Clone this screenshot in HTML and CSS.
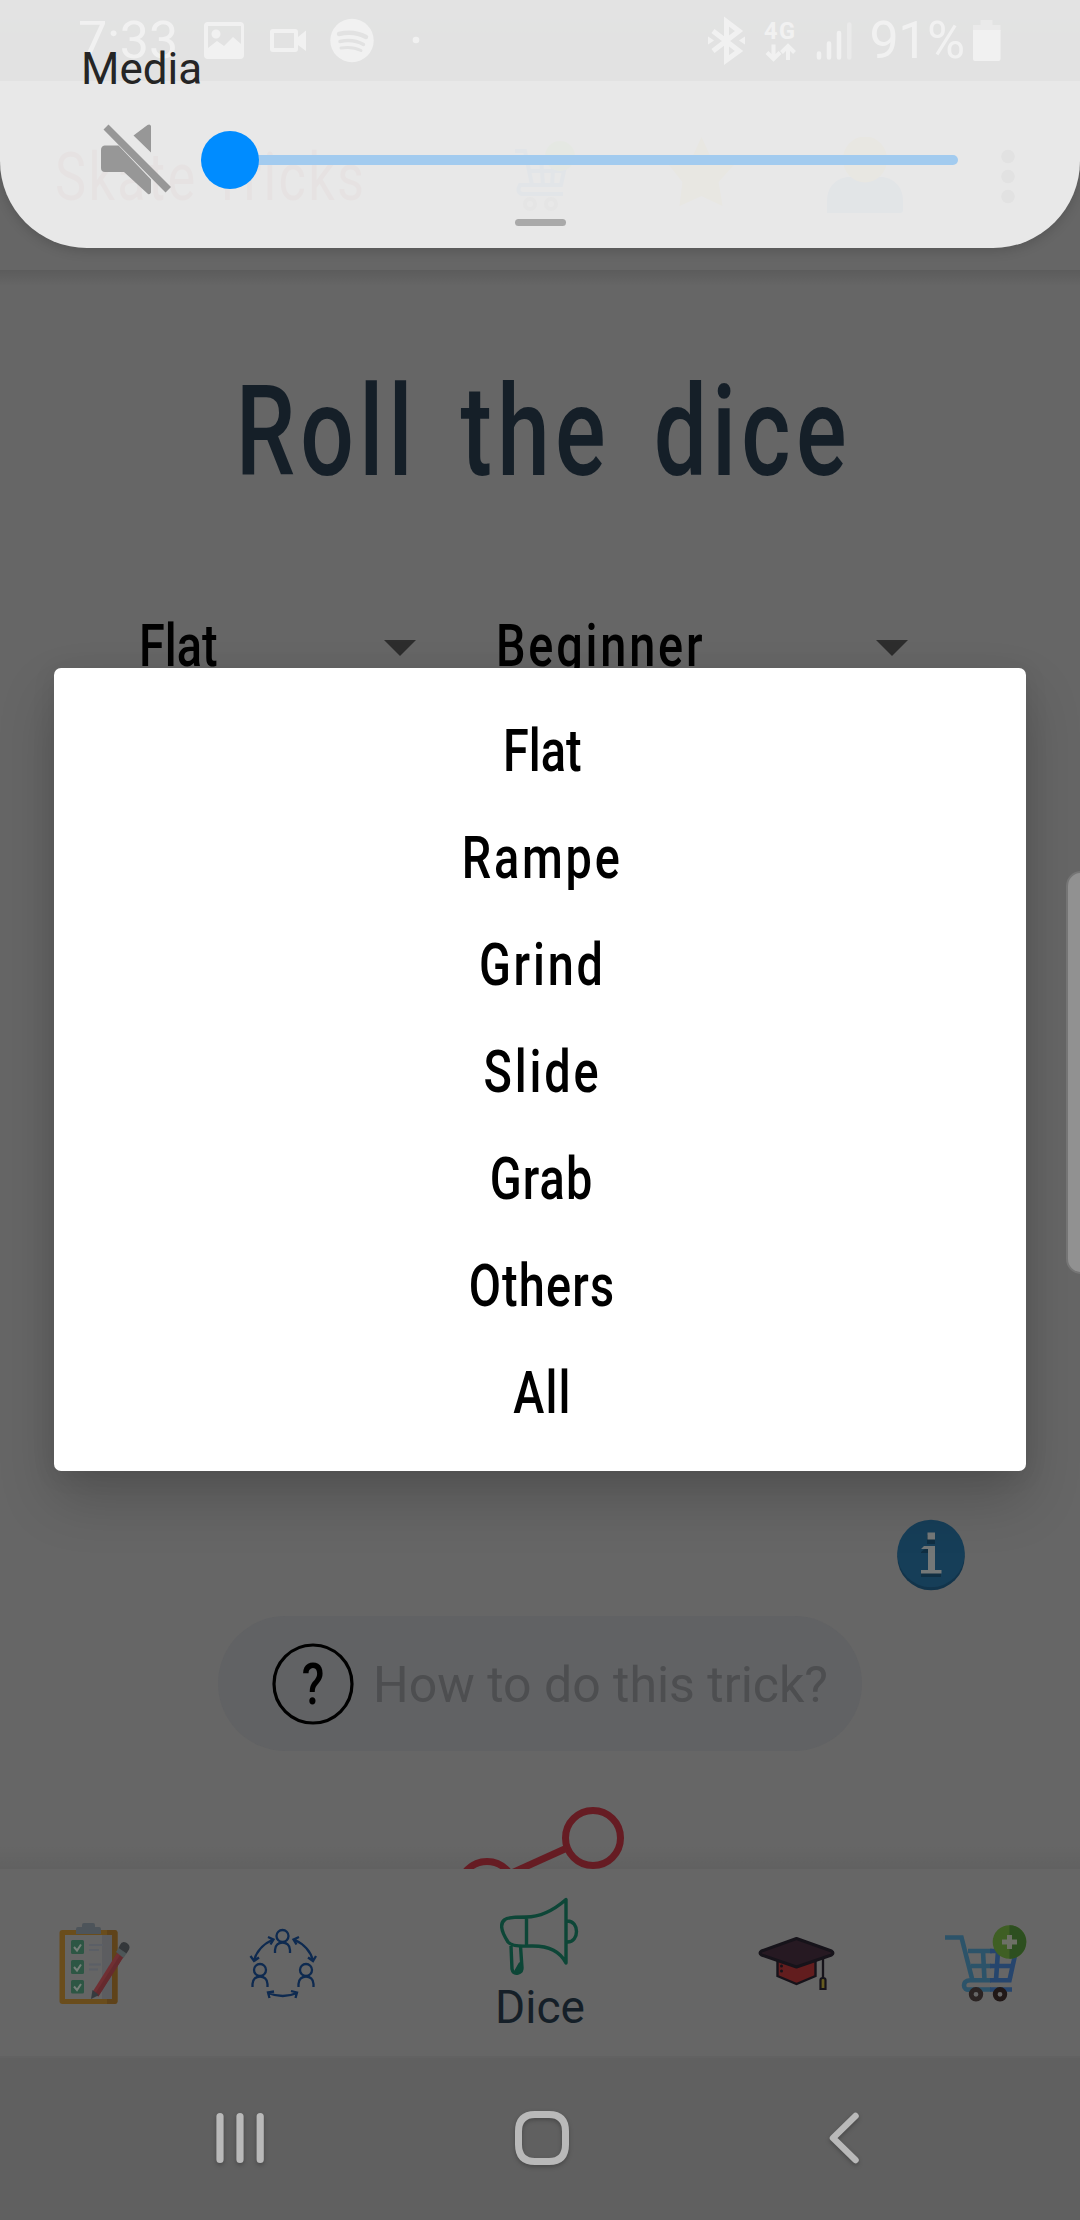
FILE: index.html
```
<!DOCTYPE html>
<html lang="en">
<head>
<meta charset="utf-8">
<title>Skate Tricks</title>
<link rel="stylesheet" href="styles.css">
</head>
<body>
<div class="screen">
  <div class="status">
    <span class="clock">7:33</span>
    <svg class="status-left" width="230" height="50" viewBox="195 15 230 50" fill="#fff">
      <path fill-rule="evenodd" d="M208 21h32q4 0 4 4v29q0 4-4 4h-32q-4 0-4-4V25q0-4 4-4zm0 4v22l9-7 7 5 9-9 8 7V25zM216 28.500a4.500 4.500 0 1 1 0 9 4.500 4.500 0 0 1 0-9z"/>
      <path fill-rule="evenodd" d="M273 28h22q3 0 3 3v5l8-6.500V50l-8-6v4q0 3-3 3h-22q-3 0-3-3V31q0-3 3-3zm1 4v15h20V32z"/>
      <circle cx="352" cy="39.500" r="21.700"/>
      <g fill="none" stroke="#000a04" stroke-linecap="round"><path d="M339 33q15-3.500 27 3" stroke-width="4.500"/><path d="M340 40.500q13-3 23.500 3" stroke-width="3.500"/><path d="M341 47q11-2 20 2.500" stroke-width="3"/></g>
      <circle cx="416" cy="39" r="3.300"/>
    </svg>
    <svg class="status-net" width="150" height="50" viewBox="705 15 150 50" fill="none" stroke="#fff">
      <path d="M713 30l26 20-12.500 9V20.500L739 30 713 50" stroke-width="5"/>
      <path d="M708 35.500v8l6-4zM745 35.500v8l-6-4z" fill="#fff" stroke="none"/>
      <text x="764" y="37.500" font-size="23.500" class="net-label" textLength="31">4G</text>
      <path d="M773.500 43.500v14M767 51.500l6.500 6.500 6.500-6.500M788 59V45.500M781.500 51.500l6.500-6.500 6.500 6.500" stroke-width="4"/>
      <g stroke-width="4.500" stroke-linecap="round"><path d="M819 52.500v4M829 42.500v14M839 32v24.500"/><path d="M849.300 23.500v33" stroke="#888"/></g>
    </svg>
    <span class="percent">91%</span>
    <svg class="battery" width="28" height="42" viewBox="0 0 28 42" fill="#fff"><path fill="#888" d="M7.500 0h12v5h8v6H0V5h7.500z"/><path d="M0 10h27.500v29q0 2-2 2h-23.500q-2 0-2-2z"/></svg>
  </div>

  <header class="appbar">
    <span class="brand"><span class="advent">Skate Tricks</span></span>
    <svg class="bar-icon" width="62" height="76" viewBox="0 0 62 76"><g fill="none" stroke="#0b3a6a" stroke-width="4"><path d="M0 14h10l7 34M10 20h42l-6 28H5q-4 7 2 9h41M14 34h34M26 20l2 28M39 20l-2 28"/></g><g fill="none" stroke="#333" stroke-width="4"><circle cx="15" cy="67" r="5"/><circle cx="36" cy="67" r="5"/></g><circle cx="45" cy="19" r="15" fill="#3f6b1b"/></svg>
    <svg class="bar-icon" width="68" height="69" viewBox="0 0 68 69"><path fill="#665000" d="M33.500 0l10 22 24 4-17 19 4 24-21-10-22 10 3-24-15-19 24-4z"/></svg>
    <svg class="bar-icon" width="77" height="76" viewBox="0 0 77 76"><path fill="#06305e" d="M0 76V65q0-21 20-25h36q20 4 20 25v8q0 3-3 3z"/><ellipse cx="38" cy="22.500" rx="22" ry="23" fill="#665000"/></svg>
    <svg class="bar-icon" width="14" height="56" viewBox="0 0 14 56"><circle cx="7" cy="7.500" r="6.700"/><circle cx="7" cy="27.500" r="6.700"/><circle cx="7" cy="47.500" r="6.700"/></svg>
  </header>

  <main class="content">
    <h1 class="title"><span class="advent">Roll the dice</span></h1>
    <div class="spinners">
      <div class="spinner kind"><span class="advent tight">Flat</span><i class="arrow"></i></div>
      <div class="spinner level"><span class="advent">Beginner</span><i class="arrow"></i></div>
    </div>
    <svg class="info" width="70" height="72" viewBox="0 0 70 72"><circle cx="35" cy="37.500" r="33.700" fill="#12344b"/><circle cx="35" cy="34.500" r="33.700" fill="#163e58"/><path fill="#102f43" d="M31 16h8v9h-8zM25 33l4-3h9v24h7v4H25v-4h7V34h-7z"/><path fill="#747878" d="M31.500 13.500h7.500v7h-7.500zM25 30l3-3h11v24h6.500v3.500H25V51h7V30z"/></svg>
    <div class="help">
      <svg width="82" height="82" viewBox="0 0 82 82"><circle cx="41" cy="41" r="39" fill="none" stroke="#000" stroke-width="3.200"/><text transform="translate(41 61) scale(.8 1)" class="q">?</text></svg>
      <span>How to do this trick?</span>
    </div>
    <svg class="share" width="170" height="62" viewBox="455 1807 170 62" fill="none" stroke="#661c23" stroke-width="7"><circle cx="593" cy="1838" r="27.500"/><circle cx="487" cy="1889" r="27.500"/><path d="M567 1848l-62 28"/></svg>
  </main>

  <nav class="tabs">
    <svg class="tab" width="72" height="84" viewBox="59 1922 72 84">
      <rect x="59.500" y="1930" width="58" height="74" rx="3" fill="#6a4d1c"/><path d="M107 1930h7.500q3 0 3 3v68q0 3-3 3H107z" fill="#5f431a"/><path d="M65 1935h47v64H65z" fill="#656565"/><path d="M102 1935h10v64h-10z" fill="#5c5d60"/>
      <path d="M76 1934v-5q0-2 2-2h4v-2q0-2 2-2h9q2 0 2 2v2h4q2 0 2 2v5z" fill="#4d545a"/>
      <g fill="#2d5644"><rect x="71" y="1940" width="13" height="14" rx="1.500"/><rect x="71" y="1960" width="13" height="14" rx="1.500"/><rect x="71" y="1980" width="13" height="13.500" rx="1.500"/></g>
      <g fill="none" stroke="#767f7a" stroke-width="2"><path d="M74 1947l3 3.500 4-6M74 1967l3 3.500 4-6M74 1986.500l3 3.500 4-6"/></g>
      <path d="M89 1945h14M89 1950h10M89 1964.500h12M89 1969.500h9" stroke="#5b5f66" stroke-width="2"/>
      <path d="M119 1950l6 4.500-27 42-5.500-4.500z" fill="#702f33"/><path d="M122 1952l-27 42 3.500 2.500 26.500-42z" fill="#652a2e"/>
      <path d="M92.500 1990l6.500 5-8 4z" fill="#363b3f"/><path d="M118.500 1948l8 5.500-3 4.500-7.500-6z" fill="#4d5658"/><path d="M120 1945q2-4.500 6-2.500 5 3 3 7l-2.500 4-8-5.500z" fill="#34373a"/>
    </svg>
    <svg class="tab" width="68" height="72" viewBox="249 1929 68 72" fill="none" stroke="#0e2a50" stroke-width="2.300">
      <circle cx="282.500" cy="1937" r="6"/><path d="M275 1954v-3c0-10 15-10 15 0v3"/>
      <circle cx="260" cy="1971" r="6"/><path d="M252.500 1988v-3c0-10 15-10 15 0v3"/>
      <circle cx="306" cy="1971" r="6"/><path d="M298.500 1988v-3c0-10 15-10 15 0v3"/>
      <path d="M254 1962q3-14 19-21.500M250.500 1957l3.500 5 5-3.500M268 1938l5.500 2.500-3 5"/>
      <path d="M313 1962q-3-14-19-21.500M316 1957l-3 5-5-3.500M299 1938l-5.500 2.500 3 5"/>
      <path d="M268 1994q15 6 29 0M274 1992.500l-6 1 1.500 5.500M291 1992l6 1.500-1.500 5.500"/>
    </svg>
    <div class="tab active">
      <svg width="80" height="80" viewBox="500 1897 80 80" fill="none" stroke="#0d4637" stroke-width="3.400" stroke-linejoin="round"><path d="M508 1942Q497 1925 505 1919.500 508 1917 526 1917 546 1917 566 1899.500V1963Q557 1945 530 1946 512 1947 508 1942zM526.500 1917v29M567.500 1921c12 0 12 21 0 21M511 1946l1 23q1 5 6 4 4-1 4-5l-1.500-22"/><path d="M520 1964l-4 7h5z" fill="#0d4637"/></svg>
      <span>Dice</span>
    </div>
    <svg class="tab" width="77" height="56" viewBox="758 1936 77 56">
      <path d="M777.500 1957h38v19l-19 8-19-8z" fill="#621d1e" stroke="#16131a" stroke-width="2.400"/><path d="M778 1958h37l-19 9z" fill="#451b1d"/>
      <path d="M796.500 1938.500l35 12.500q3 2 0 4l-35 12-35-12q-3-2 0-4z" fill="#261922" stroke="#16131a" stroke-width="3" stroke-linejoin="round"/>
      <path d="M823 1957v21" stroke="#16131a" stroke-width="2.300"/><path d="M820.500 1989v-9q0-2 2.500-2t2.500 2v9z" fill="#655b20" stroke="#16131a" stroke-width="2.200"/>
      <circle cx="781.500" cy="1966" r="1.500" fill="#16131a"/><circle cx="781.500" cy="1971" r="1.500" fill="#16131a"/>
    </svg>
    <svg class="tab" width="82" height="80" viewBox="945 1924 82 80">
      <g fill="none" stroke="#2c5369" stroke-width="4.600"><path d="M945 1937.500h16.500l11 43M968 1951h24M971 1966h20M983 1951l1.500 29M991 1980.300h-21q-6 .500-6 5 0 5 6 4.200h21"/><path stroke="#26456d" d="M990 1951h24M990 1966h23M998 1951l-2 29M1015.500 1953l-6 27.300H990M990 1989.500h22"/></g>
      <circle cx="1009.500" cy="1942" r="16.800" fill="#3f5f24"/><path d="M1009.500 1925.200a16.800 16.800 0 0 1 0 33.600z" fill="#2d4f20"/><path d="M1002 1942h15M1009.500 1935v14" stroke="#6d7066" stroke-width="5"/>
      <g fill="#666" stroke-width="4.800"><circle cx="976" cy="1994.300" r="4.800" stroke="#2b2423"/><circle cx="1000" cy="1994.300" r="4.800" stroke="#211817"/></g>
    </svg>
  </nav>

  <div class="sysnav">
    <svg width="54" height="60" viewBox="213 2108 54 60" stroke-width="7.200"><path d="M220 2116.500v43M240 2116.500v43M260.200 2116.500v43"/></svg>
    <svg class="home" width="60" height="60" viewBox="512 2108 60 60" stroke-width="7"><path d="M535 2114.500h14q16.500 0 16.500 17v13q0 17-16.500 17h-14q-16.500 0-16.500-17v-13q0-17 16.500-17z"/></svg>
    <svg width="40" height="60" viewBox="824 2108 40 60" stroke-width="6.500"><path d="M855.500 2116l-22.500 22 22.500 22"/></svg>
  </div>

  <ul class="dialog">
    <li><span class="advent tight">Flat</span></li>
    <li><span class="advent">Rampe</span></li>
    <li><span class="advent">Grind</span></li>
    <li><span class="advent">Slide</span></li>
    <li><span class="advent snug">Grab</span></li>
    <li><span class="advent snug">Others</span></li>
    <li><span class="advent snug">All</span></li>
  </ul>

  <div class="edge-handle"></div>

  <section class="volume">
    <h2>Media</h2>
    <div class="slider">
      <svg width="72" height="74" viewBox="100 124 72 74" fill="#979797"><path d="M104.500 146.500h14l32.500 34v13q-1 2.500-3 1.500L124 173h-19q-4 0-4-4v-18q0-4 3.500-4.500zM133.500 136.500l14-10.500q2.500-1.500 3.500 1v26.500zM103.500 130.500l5-5 62.500 62.500-5.500 5.500z"/></svg>
      <div class="track"><i class="thumb"></i></div>
    </div>
    <i class="grip"></i>
  </section>
</div>
</body>
</html>
```

FILE: styles.css
```
* { box-sizing: border-box; }
body { margin: 0; background: #666; font-family: Roboto, "Liberation Sans", sans-serif; }
h1, h2, ul { margin: 0; padding: 0; font-weight: 400; }
svg { display: block; flex: none; }

.screen { position: relative; display: flex; flex-direction: column; width: 1080px; height: 2220px; overflow: hidden; background: #666; }
.advent { display: inline-block; font-weight: 500; white-space: pre; transform: scaleX(.78); letter-spacing: .06em; }
.snug { letter-spacing: .025em; }
.tight { letter-spacing: 0; }

.status { display: flex; align-items: center; height: 81px; padding: 0 79px 0 78px; background: linear-gradient(#1a1a1a, #000a04 60%); color: #fff; font-size: 52px; line-height: 82px; }
.clock { width: 118px; }
.status-left { margin-right: 280px; }
.status-net { margin-right: 14px; }
.net-label { font-weight: 700; fill: #fff; stroke: none; }
.percent { width: 104px; letter-spacing: -.5px; }

.appbar { display: flex; align-items: flex-start; height: 189px; padding: 56px 67px 0 55px; }
.brand { flex: none; width: 460px; height: 80px; color: #4a0b05; font-size: 67px; line-height: 80px; }
.brand .advent { transform-origin: left; letter-spacing: .045em; font-weight: 400; }
.bar-icon + .bar-icon { margin-left: 91px; }
.bar-icon:last-child { margin-left: 97px; margin-top: 12px; }

.content { display: flex; flex-direction: column; height: 1599px; overflow: hidden;
  background: linear-gradient(rgba(0,0,0,.1), transparent 16px), linear-gradient(to top, rgba(0,0,0,.05), transparent 24px); }
.title { margin-top: 87px; height: 150px; padding-left: 8px; line-height: 150px; text-align: center; color: #151f28; font-size: 126px; }
.title .advent { transform: scaleX(.75); letter-spacing: .055em; word-spacing: .15em; }
.spinners { display: flex; margin-top: 99px; height: 80px; padding-left: 139px; font-size: 60px; line-height: 80px; color: #000; }
.spinner { display: flex; align-items: center; justify-content: space-between; }
.spinner .advent { transform-origin: left; }
.kind { width: 277px; }
.level { width: 412px; margin-left: 80px; }
.arrow { border: 16.5px solid transparent; border-top-color: #2d2d2d; border-bottom: 0; margin-top: 3px; }
.info { margin: 833px 114px 0 auto; }
.help { display: flex; align-items: center; width: 644px; height: 135px; margin: 25px 0 0 218px; padding-left: 54px; border-radius: 68px; background: #616264; color: #4d4e50; font-size: 50px; }
.help span { margin-left: 19px; padding-top: 2px; white-space: nowrap; }
.q { font-size: 58px; font-weight: 500; text-anchor: middle; }
.share { margin: 56px 0 0 455px; }

.tabs { display: flex; align-items: center; height: 189px; padding: 3px 53px 0 59px; border-bottom: 2px solid #626262; }
.tab:nth-child(1) { margin-right: 118px; }
.tab:nth-child(2) { margin-right: 177px; }
.tab:nth-child(4) { margin-right: 110px; }
.active { display: flex; flex-direction: column; align-items: center; flex: none; width: 92px; margin-right: 172px; padding-top: 3px; color: #151f28; font-size: 46px; line-height: 54px; }
.active svg { margin-bottom: 3px; }

.sysnav { display: flex; align-items: flex-start; height: 162px; padding: 50px 216px 0 213px; background: #606060; }
.sysnav svg { fill: none; stroke: #b9b9b9; stroke-linecap: round; stroke-linejoin: round; filter: drop-shadow(0 2px 2px rgba(0,0,0,.25)); }
.sysnav .home { margin: 0 252px 0 245px; }

.dialog { position: absolute; left: 54px; top: 668px; width: 972px; height: 803px; padding: 29px 0 0 4px; list-style: none; background: #fff; border-radius: 7px; box-shadow: 0 28px 56px rgba(0,0,0,.19), 0 4px 24px rgba(0,0,0,.08); }
.dialog li { height: 107px; line-height: 107px; text-align: center; font-size: 60px; color: #000; }

.edge-handle { position: absolute; left: 1066px; top: 871px; width: 30px; height: 403px; background: #919191; border: 2px solid #757575; border-radius: 16px; }

.volume { position: absolute; left: 0; top: 0; width: 1080px; height: 248px; padding: 43px 0 0 81px; border-radius: 0 0 87px 87px; background: rgba(240,240,240,.94); box-shadow: 0 3px 12px rgba(0,0,0,.16); }
.volume h2 { height: 52px; line-height: 52px; font-size: 44px; color: #252525; }
.slider { display: flex; align-items: center; height: 74px; margin: 28px 0 0 19px; }
.track { position: relative; width: 757px; height: 10px; margin: 0 0 0 29px; border-radius: 5px; background: #a2cbef; }
.thumb { position: absolute; left: 0; top: -24px; width: 58px; height: 58px; border-radius: 50%; background: #008cff; }
.grip { display: block; width: 51px; height: 7px; margin: 22px 0 0 434px; border-radius: 4px; background: #a9a9a9; }
```
